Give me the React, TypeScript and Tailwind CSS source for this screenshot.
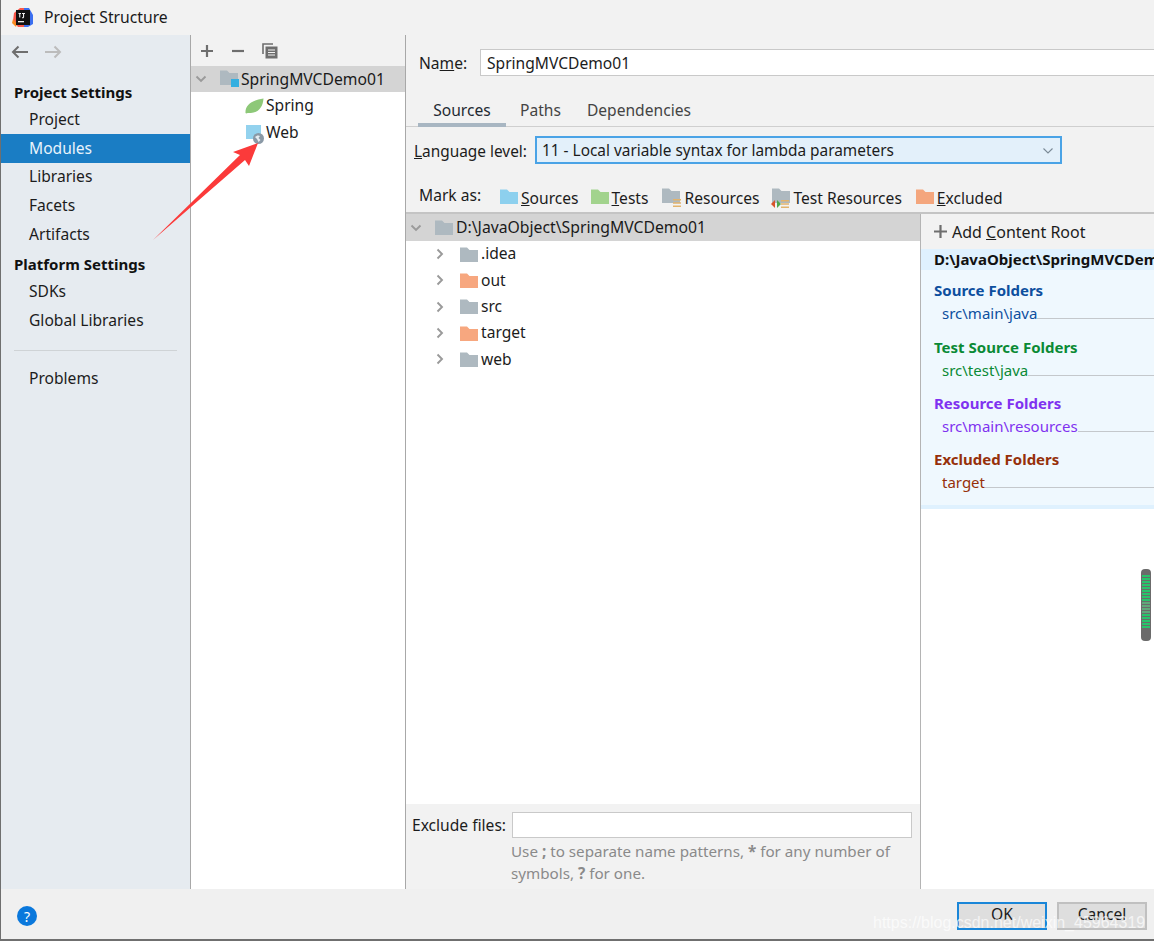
import React from "react";

function Folder({ color = "#aeb9c0", className = "" }: { color?: string; className?: string }) {
  return (
    <svg width="18" height="15" viewBox="0 0 18 15" className={"shrink-0 " + className}>
      <path d="M0 0.5H7L9.5 3H18V15H0Z" fill={color} />
    </svg>
  );
}

function Stack({ className = "" }: { className?: string }) {
  return (
    <svg width="8" height="8" viewBox="0 0 8 8" className={className}>
      <path d="M0 0H8V1.6H0ZM0 3.2H8V4.8H0ZM0 6.4H8V8H0Z" fill="#e2b36c" />
    </svg>
  );
}

function Chevron({ open, color = "#9a9a9a", thin }: { open?: boolean; color?: string; thin?: boolean }) {
  return (
    <svg width="12" height="12" viewBox="0 0 12 12" className="shrink-0">
      <path d={open ? "M1.5 3.5L6 8L10.5 3.5" : "M3.5 1.5L8 6L3.5 10.5"} fill="none" stroke={color} strokeWidth={thin ? "1.1" : "1.9"} />
    </svg>
  );
}

function SideItem({ label, active }: { label: string; active?: boolean }) {
  return (
    <div className={"h-[28.7px] pl-[28px] flex items-center " + (active ? "bg-[#1a7dc4] text-[#e8f3fb]" : "text-[#1c1c1c]")}>
      {label}
    </div>
  );
}

function TreeRow({ label, color }: { label: string; color?: string }) {
  return (
    <div className="h-[26.3px] flex items-center pl-[28px]">
      <Chevron />
      <Folder color={color} className="ml-[14px] mr-[3px]" />
      <span className="text-[#1c1c1c]">{label}</span>
    </div>
  );
}

function FolderGroup({ title, path, color, mt }: { title: string; path: string; color: string; mt: string }) {
  return (
    <div className={mt} style={{ color }}>
      <div className="pl-[13px] h-[22px] leading-[22px] font-bold text-[15px]">{title}</div>
      <div className="pl-[21px] mt-[1px] h-[22px] flex items-center text-[15px]">
        <span className="shrink-0">{path}</span>
        <div className="flex-1 h-px bg-[#c4c8cc] mt-[10px]" />
      </div>
    </div>
  );
}

export default function App() {
  return (
    <div className="w-[1154px] h-[941px] overflow-hidden relative flex flex-col bg-[#f2f2f2] border-l border-[#6f6f6f] text-[15.6px] text-[#1c1c1c] [font-family:'Noto_Sans',sans-serif]">
      {/* title bar */}
      <div className="h-[35px] shrink-0 flex items-center pl-[11px]">
        <svg width="21" height="21" viewBox="0 0 21 21">
          <path d="M2 6L8 1H14L17 2L20 9V16L15 20H6L1 14Z" fill="#f9574a" />
          <path d="M12 1H17L21 8V17L16 20H12Z" fill="#3b6ff0" />
          <path d="M1 12L5 17L4 20L0 16Z" fill="#f98b20" />
          <rect x="4" y="3" width="14" height="15" fill="#111" />
          <rect x="6" y="14" width="6" height="1.3" fill="#eee" />
          <path d="M6.5 6H9V7H8.3V10.5H7.2V7H6.5ZM10 6H13V7H12.1V10C12.1 11 11.5 11.3 10.8 11.3H10V10.3H10.6C10.9 10.3 11 10.2 11 9.9V7H10Z" fill="#eee" />
        </svg>
        <span className="ml-[11px] text-[15.7px] text-[#1a1a1a]">Project Structure</span>
      </div>

      <div className="flex-1 flex min-h-0">
        {/* sidebar */}
        <aside className="w-[190px] shrink-0 bg-[#e6ebf0] border-r border-[#a8a8a8]">
          <div className="h-[34px] flex items-center pl-[10px] gap-[15px]">
            <svg width="18" height="14" viewBox="0 0 18 14">
              <path d="M17 7H2M7.5 1.5L2 7L7.5 12.5" fill="none" stroke="#6e6e6e" strokeWidth="2" />
            </svg>
            <svg width="18" height="14" viewBox="0 0 18 14">
              <path d="M1 7H16M10.5 1.5L16 7L10.5 12.5" fill="none" stroke="#bcbcbc" strokeWidth="2" />
            </svg>
          </div>
          <div className="h-[27.3px] mt-[9px] pl-[13px] pt-[1px] flex items-center font-bold text-[15px] text-[#111]">Project Settings</div>
          <SideItem label="Project" />
          <SideItem label="Modules" active />
          <SideItem label="Libraries" />
          <SideItem label="Facets" />
          <SideItem label="Artifacts" />
          <div className="h-[28.7px] pl-[13px] pt-[2px] flex items-center font-bold text-[15px] text-[#111]">Platform Settings</div>
          <SideItem label="SDKs" />
          <SideItem label="Global Libraries" />
          <div className="h-px bg-[#cfd3d6] mx-[13px] mt-[15px] mb-[14px]" />
          <SideItem label="Problems" />
        </aside>

        {/* module tree */}
        <section className="w-[215px] shrink-0 bg-white border-r border-[#a8a8a8] flex flex-col">
          <div className="h-[31px] bg-[#f2f2f2] flex items-center pl-[9px] gap-[17px]">
            <svg width="14" height="14" viewBox="0 0 14 14">
              <path d="M7 1V13M1 7H13" stroke="#6e6e6e" strokeWidth="2.2" />
            </svg>
            <svg width="14" height="14" viewBox="0 0 14 14">
              <path d="M1 7H13" stroke="#6e6e6e" strokeWidth="2.2" />
            </svg>
            <svg width="16" height="16" viewBox="0 0 16 16">
              <path d="M1 11V1H11" fill="none" stroke="#6e6e6e" strokeWidth="1.6" />
              <rect x="3.5" y="3.5" width="12" height="12" fill="#6e6e6e" />
              <path d="M6 7H13M6 9.5H13M6 12H13" stroke="#f2f2f2" strokeWidth="1" />
            </svg>
          </div>
          <div className="h-[26px] bg-[#d4d4d4] flex items-center pl-[4px]">
            <Chevron open />
            <span className="relative ml-[13px] mr-[2px] w-[19px] h-[16px] flex">
              <Folder className="-mt-[1px]" />
              <span className="absolute right-0 bottom-0 w-[8px] h-[8px] bg-[#35afe0]" />
            </span>
            <span className="text-[#1a1a1a] pt-[1px] text-[15.7px]">SpringMVCDemo01</span>
          </div>
          <div className="h-[27px] flex items-center pl-[54px]">
            <svg width="19" height="16" viewBox="0 0 19 16" className="mr-[2px]">
              <path d="M0.5 15C0 7 7 2 18.5 0.5C18 9 13 15.5 5 15C3.5 15 2 14.5 1.3 15.5Z" fill="#8dc878" />
            </svg>
            <span>Spring</span>
          </div>
          <div className="h-[27px] flex items-center pl-[55px]">
            <span className="relative w-[18px] h-[16px] mr-[2px] shrink-0">
              <span className="absolute left-0 top-0 w-[15px] h-[14px] bg-[#93d2ee]" />
              <svg width="11" height="11" viewBox="0 0 11 11" className="absolute left-[7px] top-[8px]">
                <circle cx="5.5" cy="5.5" r="5.5" fill="#8a99a6" />
                <path d="M2 4C3.5 2.5 5.5 2 7 3L5.5 5L7.5 7L5.5 9L4 6Z" fill="#e6edf2" />
              </svg>
            </span>
            <span>Web</span>
          </div>
        </section>

        {/* details */}
        <section className="flex-1 min-w-0 flex flex-col">
          <div className="h-[49px] shrink-0 flex items-start pl-[13px] pt-[14px]">
            <span className="w-[61px] leading-[29px]">Na<u>m</u>e:</span>
            <div className="flex-1 h-[27px] bg-white border border-[#c9c9c9] border-r-0 pl-[6px] leading-[26px]">SpringMVCDemo01</div>
          </div>
          <div className="h-[43px] shrink-0 flex border-b border-[#cfcfcf] pl-[12px]">
            <div className="w-[88px] h-[43px] flex items-center justify-center pt-[14px] border-b-[4px] border-[#a8b6c2] text-[#1f2a33]">Sources</div>
            <div className="ml-[14px] h-[43px] flex items-center pt-[10px] text-[#444]">Paths</div>
            <div className="ml-[26px] h-[43px] flex items-center pt-[10px] text-[#444]">Dependencies</div>
          </div>
          <div className="h-[37px] shrink-0 flex items-end pl-[8px]">
            <span className="w-[121px] leading-[28px] text-[15.4px] translate-y-[2px]"><u>L</u>anguage level:</span>
            <div className="w-[527px] h-[28px] bg-[#e3f0fa] border-2 border-[#4aa3e6] pl-[5px] pr-[6px] pt-[1px] flex items-center justify-between text-[15.4px]">
              <span>11 - Local variable syntax for lambda parameters</span>
              <Chevron open thin color="#7a8a96" />
            </div>
          </div>
          <div className="h-[48px] shrink-0 flex items-end pl-[13px] pb-[2px]">
            <span className="w-[81px] mb-[3px]">Mark as:</span>
            <Folder color="#8dd0ee" className="mr-[3px] mb-[6px]" />
            <span><u>S</u>ources</span>
            <Folder color="#a2d38d" className="ml-[12px] mr-[3px] mb-[6px]" />
            <span className="mr-[2px]"><u>T</u>ests</span>
            <span className="relative ml-[12px] mr-[3px] w-[19px] h-[19px] mb-[3px]">
              <Folder className="absolute left-0 top-0" />
              <Stack className="absolute right-0 bottom-0" />
            </span>
            <span>Resources</span>
            <span className="relative ml-[12px] mr-[4px] w-[18px] h-[20px] mb-[2px]">
              <Folder className="absolute left-[1px] top-0" />
              <Stack className="absolute right-0 bottom-0" />
              <svg width="10" height="8" viewBox="0 0 10 8" className="absolute left-0 bottom-0">
                <path d="M4 0V8L0 4Z" fill="#d9542b" />
                <path d="M6 0V8L10 4Z" fill="#4fa84f" />
              </svg>
            </span>
            <span>Test Resources</span>
            <Folder color="#f4a67d" className="ml-[14px] mr-[3px] mb-[6px]" />
            <span><u>E</u>xcluded</span>
          </div>

          <div className="flex-1 min-h-0 flex border-t-2 border-[#c4c4c4]">
            <div className="w-[515px] shrink-0 flex flex-col bg-white border-r border-[#b4b4b4]">
              <div className="h-[27px] bg-[#d4d4d4] flex items-center pl-[4px] shrink-0">
                <Chevron open />
                <Folder className="ml-[13px] mr-[3px]" />
                <span className="text-[#1a1a1a] text-[15.75px]">D:\JavaObject\SpringMVCDemo01</span>
              </div>
              <TreeRow label=".idea" />
              <TreeRow label="out" color="#f7a77f" />
              <TreeRow label="src" />
              <TreeRow label="target" color="#f7a77f" />
              <TreeRow label="web" />
              <div className="flex-1" />
              <div className="h-[85px] shrink-0 bg-[#f2f2f2] pl-[6px] pr-[8px] pt-[8px]">
                <div className="flex">
                  <span className="w-[100px] leading-[26px] shrink-0">Exclude files:</span>
                  <div className="flex-1 h-[26px] bg-white border border-[#c9c9c9]" />
                </div>
                <div className="pl-[99px] mt-[2px] leading-[22px] text-[15.2px] text-[#8a8a8a]">
                  Use <b>;</b> to separate name patterns, <b>*</b> for any number of symbols, <b>?</b> for one.
                </div>
              </div>
            </div>
            <div className="flex-1 min-w-0 flex flex-col bg-white overflow-hidden">
              <div className="h-[35px] shrink-0 bg-[#f2f2f2] flex items-center pl-[13px]">
                <svg width="13" height="13" viewBox="0 0 13 13" className="mr-[5px]">
                  <path d="M6.5 0V13M0 6.5H13" stroke="#6e6e6e" strokeWidth="2.2" />
                </svg>
                <span className="text-[16px]">Add <u>C</u>ontent Root</span>
              </div>
              <div className="h-[21px] shrink-0 bg-[#dff1fe] pl-[13px] leading-[21px] font-bold text-[15px] text-[#111] whitespace-nowrap">D:\JavaObject\SpringMVCDemo01</div>
              <div className="h-[235px] shrink-0 bg-[#eff8fe] pt-[9px]">
                <FolderGroup title="Source Folders" path="src\main\java" color="#0d4f9e" mt="" />
                <FolderGroup title="Test Source Folders" path="src\test\java" color="#0a8a35" mt="mt-[12px]" />
                <FolderGroup title="Resource Folders" path="src\main\resources" color="#7f32f0" mt="mt-[11px]" />
                <FolderGroup title="Excluded Folders" path="target" color="#96300a" mt="mt-[11px]" />
              </div>
              <div className="h-[4px] shrink-0 bg-[#dff1fe]" />
            </div>
          </div>
        </section>
      </div>

      {/* footer */}
      <div className="h-[52px] shrink-0 bg-[#f0f0f0] border-b-2 border-[#6f6f6f] flex items-start pl-[16px] pr-[7px]">
        <span className="mt-[17px] w-[20px] h-[20px] rounded-full bg-[#0a78dc] text-white text-[14px] flex items-center justify-center">?</span>
        <div className="ml-auto mt-[13px] flex gap-[10px]">
          <div className="w-[90px] h-[28px] bg-[#dedede] border-2 border-[#1a86d8] flex items-center justify-center pb-[3px]">OK</div>
          <div className="w-[90px] h-[28px] bg-[#dedede] border-2 border-[#c0c0c0] flex items-center justify-center pb-[3px]">Cancel</div>
        </div>
      </div>

      {/* annotation arrow */}
      <svg width="120" height="110" viewBox="0 0 120 110" className="absolute left-[150px] top-[140px] pointer-events-none">
        <path d="M2 100L89 15L82 12L107 3L98 26L94 20Z" fill="#fb3a3a" />
      </svg>

      {/* floating widget */}
      <div className="absolute left-[1140px] top-[569px] w-[10px] h-[72px] rounded-[4px] bg-[#6b6b6b] flex flex-col gap-[1.5px] px-[1px] py-[6px]">
        {Array.from({ length: 18 }).map((_, i) => (
          <div key={i} className={"h-[1.5px] " + (i < 9 ? "bg-[#27c46b]" : i < 13 ? "bg-[#5fa87a]" : "bg-[#27c46b]")} />
        ))}
      </div>

      {/* watermark */}
      <div className="absolute left-[872px] top-[911px] text-[16px] text-white/70 whitespace-nowrap [font-family:'Liberation_Sans',sans-serif]">https://blog.csdn.net/weixin_45964319</div>
    </div>
  );
}
